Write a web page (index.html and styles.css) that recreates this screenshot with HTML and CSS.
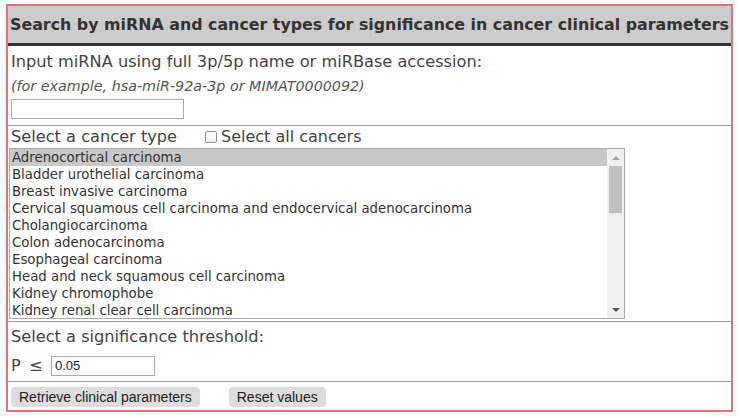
FILE: index.html
```html
<!DOCTYPE html>
<html>
<head>
<meta charset="utf-8">
<link rel="stylesheet" href="styles.css">
</head>
<body>
<div class="frame">
  <div class="title">Search by miRNA and cancer types for significance in cancer clinical parameters</div>
  <div class="sec sec-input">
    <div class="label">Input miRNA using full 3p/5p name or miRBase accession:</div>
    <div class="hint">(for example, hsa-miR-92a-3p or MIMAT0000092)</div>
    <div class="textbox mirna"></div>
  </div>
  <div class="sec sec-cancer">
    <div class="label row">
      <span class="row-label">Select a cancer type</span>
      <span class="check"><span class="box"></span>Select all cancers</span>
    </div>
    <div class="listbox">
      <div class="items">
        <div class="item selected">Adrenocortical carcinoma</div>
        <div class="item">Bladder urothelial carcinoma</div>
        <div class="item">Breast invasive carcinoma</div>
        <div class="item">Cervical squamous cell carcinoma and endocervical adenocarcinoma</div>
        <div class="item">Cholangiocarcinoma</div>
        <div class="item">Colon adenocarcinoma</div>
        <div class="item">Esophageal carcinoma</div>
        <div class="item">Head and neck squamous cell carcinoma</div>
        <div class="item">Kidney chromophobe</div>
        <div class="item">Kidney renal clear cell carcinoma</div>
      </div>
      <div class="scrollbar">
        <div class="arrow up"></div>
        <div class="track"><div class="thumb"></div></div>
        <div class="arrow down"></div>
      </div>
    </div>
  </div>
  <div class="sec sec-threshold">
    <div class="label">Select a significance threshold:</div>
    <div class="prow">
      <span class="p">P <span class="le">≤</span></span>
      <div class="textbox pval">0.05</div>
    </div>
  </div>
  <div class="sec sec-buttons">
    <span class="btn">Retrieve clinical parameters</span>
    <span class="btn">Reset values</span>
  </div>
</div>
</body>
</html>
```

FILE: styles.css
```css
html, body {
  margin: 0;
  padding: 0;
  background: #ffffff;
}
body {
  font-family: "DejaVu Sans", Verdana, sans-serif;
  color: #444444;
}
.frame {
  margin: 4px 0 0 6px;
  width: 723px;
  border: 2px solid #e07272;
  padding-bottom: 3px;
}
.title {
  height: 37px;
  line-height: 37px;
  background: #cccccc;
  border-bottom: 3px solid #333333;
  color: #333333;
  font-weight: bold;
  font-size: 15.85px;
  padding-left: 2px;
  white-space: nowrap;
  overflow: hidden;
}
.sec {
  border-top: 1px solid #9c9c9c;
  padding-left: 3px;
}
.sec-input {
  border-top: none;
  padding-top: 6px;
  padding-bottom: 6px;
}
.label {
  font-size: 16.2px;
  line-height: 20px;
  white-space: nowrap;
}
.hint {
  margin-top: 5px;
  font-size: 14.3px;
  line-height: 18px;
  font-style: italic;
  color: #555555;
}
.textbox {
  box-sizing: border-box;
  height: 20px;
  border: 1px solid #a9a9a9;
  background: #fff;
}
.mirna {
  margin-top: 4px;
  width: 173px;
}
.sec-cancer {
  padding-top: 1px;
  padding-left: 1px;
}
.row {
  display: flex;
  align-items: center;
  padding-left: 2px;
}
.row-label {
  width: 194px;
}
.check {
  display: flex;
  align-items: center;
  font-size: 16px;
}
.box {
  box-sizing: border-box;
  width: 12px;
  height: 12px;
  border: 1px solid #8f8f8f;
  border-radius: 2px;
  background: linear-gradient(#ffffff, #ececec);
  margin-right: 4px;
}
.listbox {
  box-sizing: border-box;
  margin-top: 1px;
  width: 616px;
  height: 171px;
  border: 1px solid #ababab;
  display: flex;
  overflow: hidden;
}
.items {
  flex: 1;
  overflow: hidden;
}
.item {
  height: 17px;
  line-height: 17px;
  font-size: 13.3px;
  padding-left: 2px;
  color: #333333;
  white-space: nowrap;
}
.item.selected {
  background: #c8c8c8;
}
.scrollbar {
  width: 17px;
  background: #f0f0f0;
  display: flex;
  flex-direction: column;
}
.arrow {
  height: 17px;
  display: flex;
  align-items: center;
  justify-content: center;
}
.arrow.up::before {
  content: "";
  border-left: 4px solid transparent;
  border-right: 4px solid transparent;
  border-bottom: 4px solid #a3a3a3;
}
.arrow.down::before {
  content: "";
  border-left: 4px solid transparent;
  border-right: 4px solid transparent;
  border-top: 4px solid #505050;
}
.track {
  flex: 1;
  padding: 0 2px;
}
.thumb {
  height: 47px;
  background: #c1c1c1;
}
.sec-threshold {
  margin-top: 2px;
  padding-top: 5px;
  padding-bottom: 5px;
}
.prow {
  margin-top: 9px;
  display: flex;
  align-items: center;
}
.p {
  font-size: 16.2px;
  width: 40px;
  line-height: 20px;
}
.le {
  margin-left: 3px;
}
.pval {
  width: 104px;
  font-family: "Liberation Sans", Arial, sans-serif;
  font-size: 13px;
  line-height: 18px;
  padding-left: 3px;
  color: #222;
}
.sec-buttons {
  padding-top: 5px;
  display: flex;
  gap: 29px;
}
.btn {
  box-sizing: border-box;
  height: 20px;
  line-height: 20px;
  padding: 0 8px;
  background: #dddddd;
  border-radius: 4px;
  font-family: "Liberation Sans", Arial, sans-serif;
  font-size: 14px;
  color: #222222;
}
```
